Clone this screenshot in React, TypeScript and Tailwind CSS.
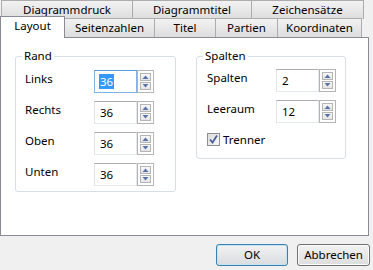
import React from "react";

const font = { fontFamily: '"Segoe UI", "Noto Sans", "Open Sans", sans-serif' };

const topTabs = [
  { label: "Diagrammdruck", w: "w-[132px]" },
  { label: "Diagrammtitel", w: "w-[120px]" },
  { label: "Zeichensätze", w: "w-[113px]" },
];

const bottomTabs = [
  { label: "Seitenzahlen", w: "w-[91px]" },
  { label: "Titel", w: "w-[62px]" },
  { label: "Partien", w: "w-[63px]" },
  { label: "Koordinaten", w: "w-[85px]" },
];

const Tab: React.FC<{ label: string; w: string }> = ({ label, w }) => (
  <div
    className={`${w} h-[19px] -ml-px first:ml-0 border border-b-0 border-[#acacac] bg-gradient-to-b from-[#f2f2f2] to-[#dddddd] flex items-center justify-center text-[11.5px] leading-none text-black`}
  >
    {label}
  </div>
);

const SpinBtn: React.FC<{ up?: boolean }> = ({ up }) => (
  <div className="flex-1 border border-[#b5b5b5] bg-gradient-to-b from-[#f8f8f8] to-[#e4e4e4] flex items-center justify-center">
    <svg width="7" height="4" viewBox="0 0 7 4">
      {up ? (
        <path d="M0.5 4 L3.5 0.5 L6.5 4 Z" fill="#5a72a8" />
      ) : (
        <path d="M0.5 0 L6.5 0 L3.5 3.5 Z" fill="#5a72a8" />
      )}
    </svg>
  </div>
);

const Spin: React.FC<{ value: string; focused?: boolean }> = ({ value, focused }) => (
  <div className="flex h-[23px]">
    <div
      className={`w-[43px] h-full border flex items-center pl-[4px] text-[11.5px] ${
        focused
          ? "border-[#7eb4ea] border-t-[#569de5]"
          : "border-[#e3e9ef] border-t-[#abadb3] border-l-[#e2e3ea]"
      }`}
    >
      {focused ? (
        <span className="bg-[#3399ff] text-white px-px leading-[15px]">{value}</span>
      ) : (
        <span className="px-px leading-[15px]">{value}</span>
      )}
    </div>
    <div className="w-[17px] h-full border border-[#b4b4b4] bg-white flex flex-col gap-px p-[2px]">
      <SpinBtn up />
      <SpinBtn />
    </div>
  </div>
);

const Row: React.FC<{ label: string; value: string; focused?: boolean }> = ({
  label,
  value,
  focused,
}) => (
  <div className="flex items-start h-[31px]">
    <div className="w-[69px] text-[11.5px] leading-[15px] pt-[1px]">{label}</div>
    <Spin value={value} focused={focused} />
  </div>
);

const App: React.FC = () => {
  return (
    <div className="w-[373px] h-[270px] bg-[#f0f0f0] text-black" style={font}>
      {/* Tabs */}
      <div>
        <div className="flex pl-[1px] h-[18px]">
          {topTabs.map((t) => (
            <Tab key={t.label} {...t} />
          ))}
        </div>
        <div className="flex items-end h-[19px]">
          <div className="w-[65px] h-[22px] -mb-px relative z-10 border border-b-0 border-[#898c95] bg-white flex items-start justify-center pt-[3px] text-[11.5px] leading-none">
            Layout
          </div>
          {bottomTabs.map((t) => (
            <Tab key={t.label} {...t} />
          ))}
        </div>
      </div>

      {/* Panel */}
      <div className="w-[369px] h-[199px] border border-[#898c95] bg-white flex gap-[20px] pl-[14px] pt-[11px]">
        <fieldset className="w-[161px] h-[143px] border border-[#d5dfe5] rounded-[3px] pl-[9px] pt-[7px]">
          <legend className="text-[11.5px] leading-[14px] px-[2px] -ml-[3px]">Rand</legend>
          <Row label="Links" value="36" focused />
          <Row label="Rechts" value="36" />
          <Row label="Oben" value="36" />
          <Row label="Unten" value="36" />
        </fieldset>
        <fieldset className="w-[150px] h-[110px] border border-[#d5dfe5] rounded-[3px] pl-[10px] pt-[6px]">
          <legend className="text-[11.5px] leading-[14px] px-[2px] -ml-[4px]">Spalten</legend>
          <Row label="Spalten" value="2" />
          <Row label="Leeraum" value="12" />
          <div className="flex items-center gap-[3px] mt-[1px]">
            <div className="w-[13px] h-[13px] border border-[#8f8f8f] bg-gradient-to-br from-[#dcdcdc] to-[#f8f8f8] flex items-center justify-center">
              <svg width="9" height="9" viewBox="0 0 9 9">
                <path d="M1 4.5 L3.5 7.5 L8 0.5" fill="none" stroke="#4a5f97" strokeWidth="1.8" />
              </svg>
            </div>
            <span className="text-[11.5px] leading-[15px]">Trenner</span>
          </div>
        </fieldset>
      </div>

      {/* Buttons */}
      <div className="flex justify-end gap-[9px] pr-[3px] pt-[8px]">
        <button className="w-[72px] h-[22px] rounded-[3px] border border-[#3c7fb1] bg-gradient-to-b from-[#f2f2f2] to-[#d9dde0] text-[11.5px] shadow-[inset_0_0_0_1px_#c4e5f6]">
          OK
        </button>
        <button className="w-[73px] h-[22px] rounded-[3px] border border-[#707070] bg-gradient-to-b from-[#f2f2f2] to-[#dddddd] text-[11.5px] shadow-[inset_0_0_0_1px_#fcfcfc]">
          Abbrechen
        </button>
      </div>
    </div>
  );
};

export default App;
